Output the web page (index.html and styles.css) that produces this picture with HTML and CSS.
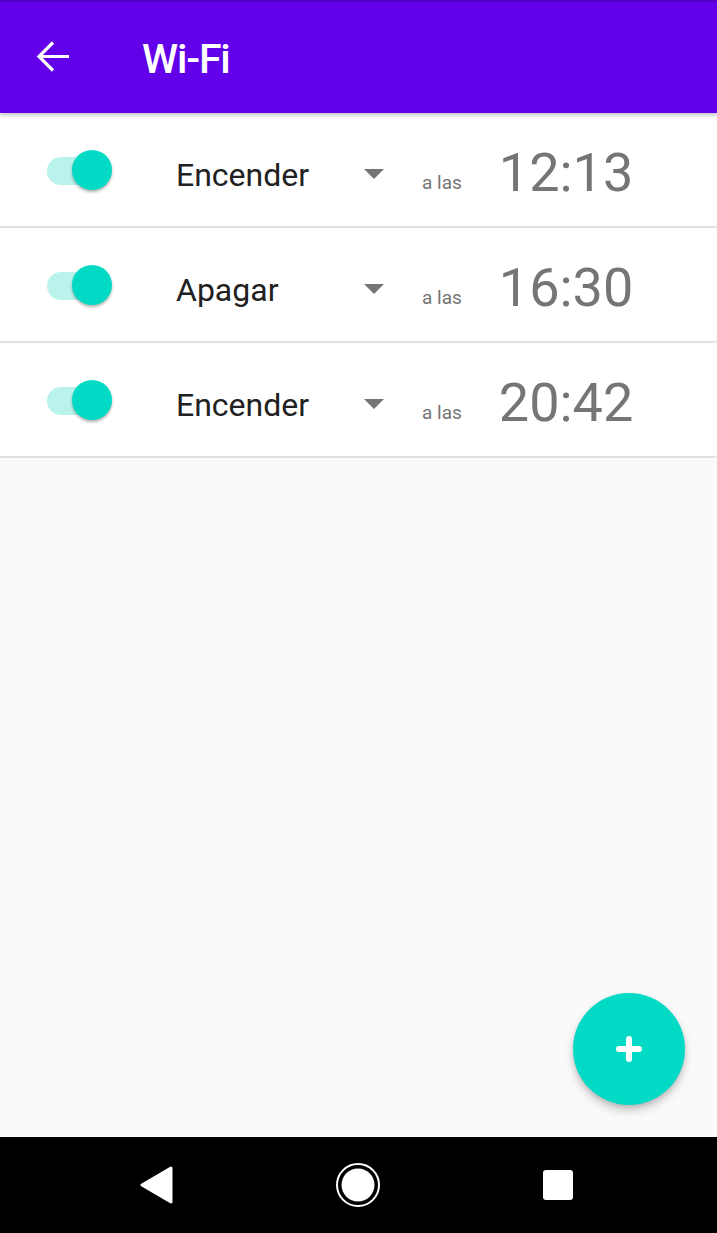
FILE: index.html
```html
<!DOCTYPE html>
<html lang="es">
<head>
<meta charset="utf-8">
<link rel="stylesheet" href="styles.css">
</head>
<body>
<div class="screen">
  <header class="appbar">
    <svg class="back" width="34" height="34" viewBox="0 0 34 34"><path d="M33 16.5H3M17 2.5L3 16.5L17 30.5" fill="none" stroke="#fff" stroke-width="3.2"/></svg>
    <h1 class="title">Wi-Fi</h1>
  </header>
  <main class="list">
    <div class="row">
      <div class="switch"><span class="track"></span><span class="thumb"></span></div>
      <span class="action">Encender</span>
      <span class="caret"></span>
      <span class="at">a las</span>
      <span class="time">12:13</span>
    </div>
    <div class="row">
      <div class="switch"><span class="track"></span><span class="thumb"></span></div>
      <span class="action">Apagar</span>
      <span class="caret"></span>
      <span class="at">a las</span>
      <span class="time">16:30</span>
    </div>
    <div class="row">
      <div class="switch"><span class="track"></span><span class="thumb"></span></div>
      <span class="action">Encender</span>
      <span class="caret"></span>
      <span class="at">a las</span>
      <span class="time">20:42</span>
    </div>
    <button class="fab" aria-label="Añadir">
      <svg width="30" height="30" viewBox="0 0 30 30"><path d="M15 5v20M5 15h20" stroke="#fff" stroke-width="6" stroke-linecap="round"/></svg>
    </button>
  </main>
  <nav class="navbar">
    <svg width="34" height="38" viewBox="0 0 34 38"><path d="M31 2 L2 19 L31 36 Z" fill="#fff" stroke="#fff" stroke-width="3" stroke-linejoin="round"/></svg>
    <svg width="46" height="46" viewBox="0 0 46 46"><circle cx="23" cy="23" r="21" fill="none" stroke="#fff" stroke-width="2"/><circle cx="23" cy="23" r="16.5" fill="#fff"/></svg>
    <svg width="30" height="30" viewBox="0 0 30 30"><rect x="0" y="0" width="30" height="30" rx="3" fill="#fff"/></svg>
  </nav>
</div>
</body>
</html>
```
FILE: styles.css
```css
* { box-sizing: border-box; }
html, body { margin: 0; padding: 0; }
body { font-family: Roboto, "Liberation Sans", sans-serif; background: #fafafa; }
.screen { width: 717px; height: 1233px; display: flex; flex-direction: column; overflow: hidden; }
.appbar {
  height: 113px; flex: none; background: #6200ea; border-top: 2px solid #5200c8;
  display: flex; align-items: center; padding-left: 36px;
  box-shadow: 0 2px 4px rgba(0,0,0,0.25); position: relative; z-index: 2;
}
.back { display: block; margin-top: -2px; }
.title { margin: 2px 0 0 72px; color: #fff; font-size: 41px; font-weight: 500; letter-spacing: -1.2px; }
.list { flex: 1; position: relative; background: #fafafa; }
.row {
  height: 115px; background: #fff; border-bottom: 2px solid #e0e0e0; border-radius: 0 4px 4px 0;
  display: flex; align-items: center;
}
.switch { width: 66px; height: 40px; margin-left: 47px; position: relative; flex: none; }
.track { position: absolute; left: 0; top: 7px; width: 58px; height: 28px; border-radius: 14px; background: #b9f3ec; }
.thumb { position: absolute; left: 25px; top: 0; width: 40px; height: 40px; border-radius: 50%; background: #03dac5; box-shadow: 0 2px 3px rgba(0,0,0,0.3); }
.action { margin: 10px 0 0 63px; width: 188px; font-size: 32px; color: #212121; }
.caret { width: 0; height: 0; border-left: 10px solid transparent; border-right: 10px solid transparent; border-top: 10px solid #757575; margin-top: 8px; }
.at { margin: 26px 0 0 38px; font-size: 19px; color: #757575; }
.time { margin: 6px 0 0 37px; font-size: 54px; color: #757575; }
.fab {
  position: absolute; left: 573px; top: 880px; width: 112px; height: 112px; border-radius: 50%;
  border: none; background: #03dac5; display: flex; align-items: center; justify-content: center;
  box-shadow: 0 6px 10px rgba(0,0,0,0.18), 0 2px 4px rgba(0,0,0,0.12); padding: 0;
}
.navbar { height: 96px; flex: none; background: #000; display: flex; align-items: center; }
.navbar svg:nth-child(1) { margin-left: 140px; }
.navbar svg:nth-child(2) { margin-left: 161px; }
.navbar svg:nth-child(3) { margin-left: 162px; }
```
